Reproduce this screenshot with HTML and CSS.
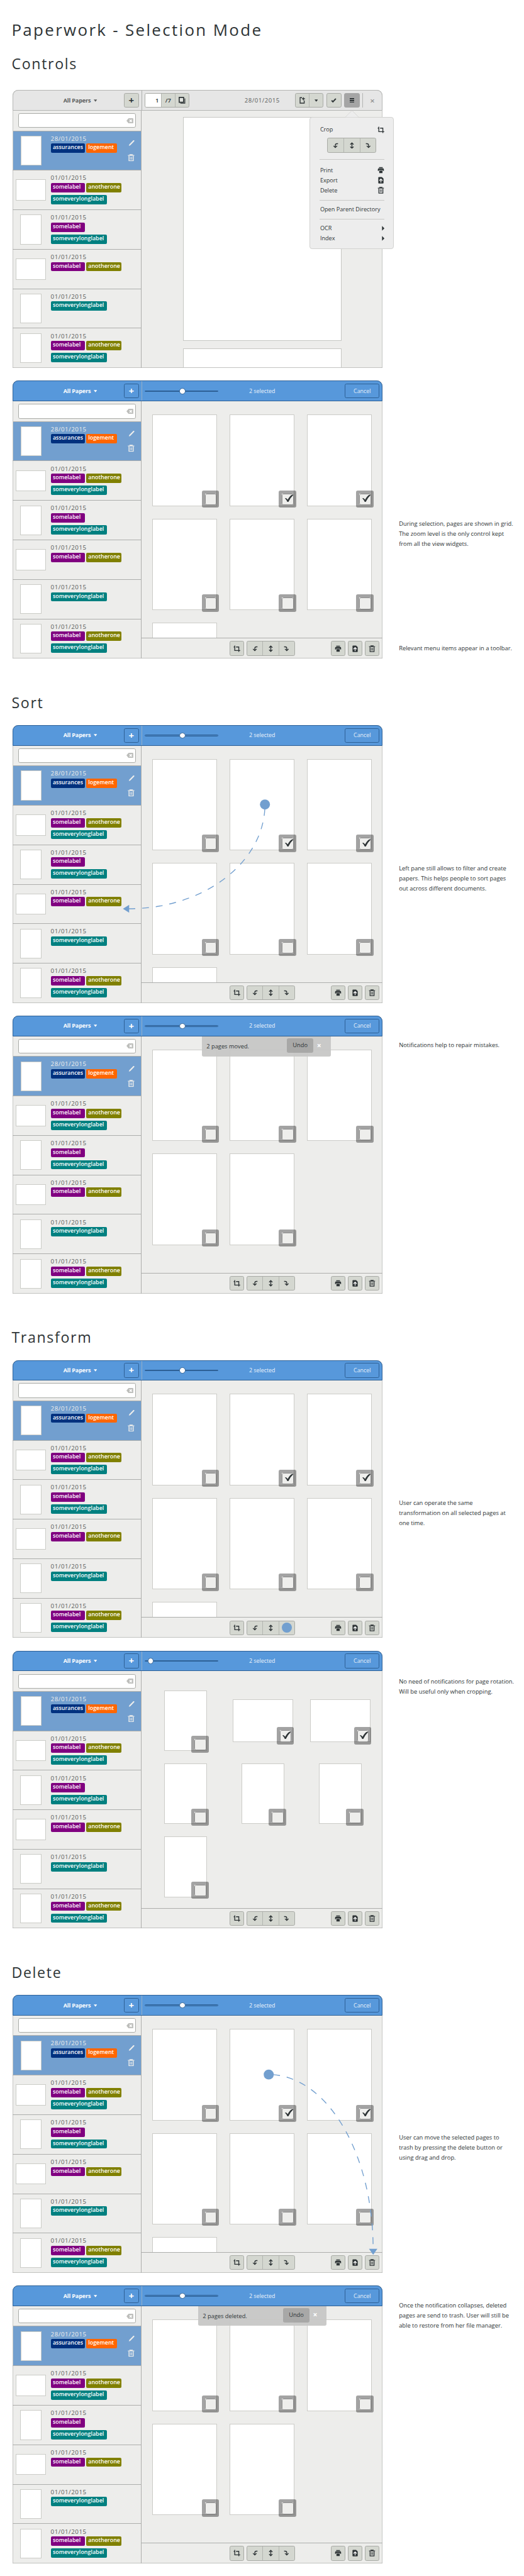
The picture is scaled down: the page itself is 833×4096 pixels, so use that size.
FILE: index.html
```html
<!DOCTYPE html>
<html lang="en">
<head>
<meta charset="utf-8">
<title>Paperwork - Selection Mode</title>
<link rel="stylesheet" href="styles.css">
</head>
<body>
<svg class="defs" width="0" height="0">
  <symbol id="i-crop" viewBox="0 0 16 16"><path d="M3.2 .8V12.2H15.8M.8 4H3.2M6.2 4H12.6V15.4" fill="none" stroke="currentColor" stroke-width="2"/></symbol>
  <symbol id="i-left" viewBox="0 0 16 16"><path d="M13.6 3.7H11Q7.4 3.7 7.4 7.3V12.2M3.2 8.6L7.4 12.6 11.6 8.6" fill="none" stroke="currentColor" stroke-width="2"/></symbol>
  <symbol id="i-right" viewBox="0 0 16 16"><path d="M2.4 3.7H5Q8.6 3.7 8.6 7.3V12.2M4.4 8.6L8.6 12.6 12.8 8.6" fill="none" stroke="currentColor" stroke-width="2"/></symbol>
  <symbol id="i-flip" viewBox="0 0 16 16"><path d="M8 2V14M4.2 5.4L8 1.7 11.8 5.4M4.2 10.6L8 14.3 11.8 10.6" fill="none" stroke="currentColor" stroke-width="2"/></symbol>
  <symbol id="i-print" viewBox="0 0 16 16"><path d="M3.7 1h8.6v2.4H3.7zM1 6.2a2 2 0 0 1 2-2h10a2 2 0 0 1 2 2V10h-2.3V8.2H3.3V10H1zM4.2 9.2h7.6V15H4.2z" fill="currentColor"/></symbol>
  <symbol id="i-export" viewBox="0 0 16 16"><path d="M3.4 .6H10.4L14.2 4.4V14.2A1.4 1.4 0 0 1 12.8 15.6H3.4A1.4 1.4 0 0 1 2 14.2V2A1.4 1.4 0 0 1 3.4 .6z" fill="currentColor"/><path d="M8.1 13.4V6M4.4 9.2L8.1 5.4 11.8 9.2" fill="none" stroke="#fff" stroke-width="1.8"/></symbol>
  <symbol id="i-trash" viewBox="0 0 16 17"><path d="M5 2V1.2H11V2M.6 3.2H15.4M3 4.5V15.6H13V4.5" fill="none" stroke="currentColor" stroke-width="2"/><path d="M6 6.4V13M8 6.4V13M10 6.4V13" stroke="currentColor" stroke-width="1"/></symbol>
  <symbol id="i-pencil" viewBox="0 0 16 16"><path d="M1.2 15L2.6 11.2 12.6 1.2Q13.6.6 14.6 1.6T14.8 3.4L5 13.4z" fill="currentColor"/></symbol>
  <symbol id="i-clear" viewBox="0 0 16 12"><path d="M0 6L5 0H14.5A1.5 1.5 0 0 1 16 1.5V10.5A1.5 1.5 0 0 1 14.5 12H5z" fill="#bdbebb"/><path d="M7.4 3.3L12.6 8.7M12.6 3.3L7.4 8.7" stroke="#fff" stroke-width="2.2"/></symbol>
  <symbol id="i-tick" viewBox="0 0 22 18"><path d="M1.5 9.5Q2.5 8 4.5 9.2L8 12.5Q13 3 18.5 .8 20.5 .2 21 1.5 15 7 9.5 17.5H7Q5 12.5 1.5 9.5z" fill="#2e3436"/></symbol>
  <symbol id="i-down" viewBox="0 0 8 6"><path d="M0 .5H8L4 5.5z" fill="currentColor"/></symbol>
  <symbol id="i-next" viewBox="0 0 6 12"><path d="M.5 .5L6 6 .5 11.5z" fill="currentColor"/></symbol>
  <symbol id="i-pages" viewBox="0 0 16 16"><path d="M1.3 1.3H11.5V12.6H1.3z" fill="#e3e5e1" stroke="currentColor" stroke-width="2.4"/><path d="M14.5 3.5V15H4" fill="none" stroke="currentColor" stroke-width="1.8"/></symbol>
  <symbol id="i-share" viewBox="0 0 16 16"><path d="M7.5 1.9H3V14.6H12.6V8.5" fill="none" stroke="currentColor" stroke-width="2"/><path d="M10.8 1V8M7.4 4.4H14.2" stroke="currentColor" stroke-width="2"/></symbol>
  <symbol id="i-check" viewBox="0 0 16 16"><path d="M3.2 8.5L6.2 11.5 13 4.2" fill="none" stroke="currentColor" stroke-width="3"/></symbol>
</svg>

<main class="sheet">
<h1 class="title">Paperwork - Selection Mode</h1>

<section>
<h2 class="heading heading-first">Controls</h2>
<div class="stage">
  <div class="window">
    <header class="bar bar-gray">
      <div class="bar-left"><span class="filter">All Papers <svg class="caret"><use href="#i-down"/></svg></span><button class="btn plus">+</button></div>
      <div class="bar-right">
        <div class="group pager"><span class="entry">1</span><span class="total">/7</span><span><svg class="ico"><use href="#i-pages"/></svg></span></div>
        <span class="bar-date">28/01/2015</span>
        <div class="bar-tools">
          <div class="group share"><span><svg class="ico"><use href="#i-share"/></svg></span><span><svg class="caret"><use href="#i-down"/></svg></span></div>
          <button class="btn"><svg class="ico"><use href="#i-check"/></svg></button>
          <button class="btn pressed"><i class="lines"></i></button>
          <i class="rule"></i><span class="close">×</span>
        </div>
      </div>
    </header>
    <aside class="side">
      <div class="search"><div class="field"><svg class="clear"><use href="#i-clear"/></svg></div></div>
      <article class="doc current"><i class="thumb"></i><div class="info"><time>28/01/2015</time><div class="tags"><b class="navy">assurances</b><b class="orange">logement</b></div></div><div class="acts"><svg class="pencil"><use href="#i-pencil"/></svg><svg class="bin"><use href="#i-trash"/></svg></div></article>
      <article class="doc"><i class="thumb wide"></i><div class="info"><time>01/01/2015</time><div class="tags"><b class="purple">somelabel</b><b class="olive">anotherone</b><b class="teal">someverylonglabel</b></div></div></article>
      <article class="doc"><i class="thumb"></i><div class="info"><time>01/01/2015</time><div class="tags"><b class="purple">somelabel</b><b class="teal">someverylonglabel</b></div></div></article>
      <article class="doc"><i class="thumb wide"></i><div class="info"><time>01/01/2015</time><div class="tags"><b class="purple">somelabel</b><b class="olive">anotherone</b></div></div></article>
      <article class="doc"><i class="thumb"></i><div class="info"><time>01/01/2015</time><div class="tags"><b class="teal">someverylonglabel</b></div></div></article>
      <article class="doc"><i class="thumb"></i><div class="info"><time>01/01/2015</time><div class="tags"><b class="purple">somelabel</b><b class="olive">anotherone</b><b class="teal">someverylonglabel</b></div></div></article>
    </aside>
    <div class="reader"><div class="sheet-page"></div><div class="sheet-page"></div></div>
  </div>
  <div class="popover">
    <svg class="beak" viewBox="0 0 32 17"><path d="M0 16.5L15.5 1 31 16.5" fill="#ededed" stroke="#cfcfcd"/></svg>
    <div class="item crop-item">Crop<svg class="ico"><use href="#i-crop"/></svg></div>
    <div class="group turn"><span><svg class="ico"><use href="#i-left"/></svg></span><span><svg class="ico"><use href="#i-flip"/></svg></span><span><svg class="ico"><use href="#i-right"/></svg></span></div>
    <div class="block b1"><div class="item">Print<svg class="ico"><use href="#i-print"/></svg></div><div class="item">Export<svg class="ico"><use href="#i-export"/></svg></div><div class="item">Delete<svg class="ico"><use href="#i-trash"/></svg></div></div>
    <div class="block b2"><div class="item"><span class="opd">Open Parent Directory</span></div></div>
    <div class="block b3"><div class="item">OCR<svg class="next"><use href="#i-next"/></svg></div><div class="item">Index<svg class="next"><use href="#i-next"/></svg></div></div>
  </div>
</div>

<div class="stage">
  <div class="window">
    <header class="bar bar-blue">
      <div class="bar-left"><span class="filter">All Papers <svg class="caret"><use href="#i-down"/></svg></span><button class="btn plus">+</button></div>
      <div class="bar-right"><div class="slider"><i class="knob"></i></div><span class="count">2 selected</span><button class="cancel">Cancel</button></div>
    </header>
    <aside class="side">
      <div class="search"><div class="field"><svg class="clear"><use href="#i-clear"/></svg></div></div>
      <article class="doc current"><i class="thumb"></i><div class="info"><time>28/01/2015</time><div class="tags"><b class="navy">assurances</b><b class="orange">logement</b></div></div><div class="acts"><svg class="pencil"><use href="#i-pencil"/></svg><svg class="bin"><use href="#i-trash"/></svg></div></article>
      <article class="doc"><i class="thumb wide"></i><div class="info"><time>01/01/2015</time><div class="tags"><b class="purple">somelabel</b><b class="olive">anotherone</b><b class="teal">someverylonglabel</b></div></div></article>
      <article class="doc"><i class="thumb"></i><div class="info"><time>01/01/2015</time><div class="tags"><b class="purple">somelabel</b><b class="teal">someverylonglabel</b></div></div></article>
      <article class="doc"><i class="thumb wide"></i><div class="info"><time>01/01/2015</time><div class="tags"><b class="purple">somelabel</b><b class="olive">anotherone</b></div></div></article>
      <article class="doc"><i class="thumb"></i><div class="info"><time>01/01/2015</time><div class="tags"><b class="teal">someverylonglabel</b></div></div></article>
      <article class="doc"><i class="thumb"></i><div class="info"><time>01/01/2015</time><div class="tags"><b class="purple">somelabel</b><b class="olive">anotherone</b><b class="teal">someverylonglabel</b></div></div></article>
    </aside>
    <div class="pane">
      <div class="pages">
        <div class="page"><i class="box"></i></div><div class="page"><i class="box"><svg><use href="#i-tick"/></svg></i></div><div class="page"><i class="box"><svg><use href="#i-tick"/></svg></i></div>
        <div class="page"><i class="box"></i></div><div class="page"><i class="box"></i></div><div class="page"><i class="box"></i></div>
        <div class="page"></div>
      </div>
      <footer class="tools"><button class="btn"><svg class="ico"><use href="#i-crop"/></svg></button><div class="group turn"><span><svg class="ico"><use href="#i-left"/></svg></span><span><svg class="ico"><use href="#i-flip"/></svg></span><span><svg class="ico"><use href="#i-right"/></svg></span></div><div class="acts-right"><button class="btn"><svg class="ico"><use href="#i-print"/></svg></button><button class="btn"><svg class="ico"><use href="#i-export"/></svg></button><button class="btn"><svg class="ico"><use href="#i-trash"/></svg></button></div></footer>
    </div>
  </div>
  <div class="notes n-select"><p>During selection, pages are shown in grid.<br>The zoom level is the only control kept<br>from all the view widgets.</p><p>Relevant menu items appear in a toolbar.</p></div>
</div>
</section>

<section>
<h2 class="heading">Sort</h2>
<div class="stage">
  <div class="window">
    <header class="bar bar-blue">
      <div class="bar-left"><span class="filter">All Papers <svg class="caret"><use href="#i-down"/></svg></span><button class="btn plus">+</button></div>
      <div class="bar-right"><div class="slider"><i class="knob"></i></div><span class="count">2 selected</span><button class="cancel">Cancel</button></div>
    </header>
    <aside class="side">
      <div class="search"><div class="field"><svg class="clear"><use href="#i-clear"/></svg></div></div>
      <article class="doc current"><i class="thumb"></i><div class="info"><time>28/01/2015</time><div class="tags"><b class="navy">assurances</b><b class="orange">logement</b></div></div><div class="acts"><svg class="pencil"><use href="#i-pencil"/></svg><svg class="bin"><use href="#i-trash"/></svg></div></article>
      <article class="doc"><i class="thumb wide"></i><div class="info"><time>01/01/2015</time><div class="tags"><b class="purple">somelabel</b><b class="olive">anotherone</b><b class="teal">someverylonglabel</b></div></div></article>
      <article class="doc"><i class="thumb"></i><div class="info"><time>01/01/2015</time><div class="tags"><b class="purple">somelabel</b><b class="teal">someverylonglabel</b></div></div></article>
      <article class="doc"><i class="thumb wide"></i><div class="info"><time>01/01/2015</time><div class="tags"><b class="purple">somelabel</b><b class="olive">anotherone</b></div></div></article>
      <article class="doc"><i class="thumb"></i><div class="info"><time>01/01/2015</time><div class="tags"><b class="teal">someverylonglabel</b></div></div></article>
      <article class="doc"><i class="thumb"></i><div class="info"><time>01/01/2015</time><div class="tags"><b class="purple">somelabel</b><b class="olive">anotherone</b><b class="teal">someverylonglabel</b></div></div></article>
    </aside>
    <div class="pane">
      <div class="pages">
        <div class="page"><i class="box"></i></div><div class="page"><i class="box"><svg><use href="#i-tick"/></svg></i></div><div class="page"><i class="box"><svg><use href="#i-tick"/></svg></i></div>
        <div class="page"><i class="box"></i></div><div class="page"><i class="box"></i></div><div class="page"><i class="box"></i></div>
        <div class="page"></div>
      </div>
      <footer class="tools"><button class="btn"><svg class="ico"><use href="#i-crop"/></svg></button><div class="group turn"><span><svg class="ico"><use href="#i-left"/></svg></span><span><svg class="ico"><use href="#i-flip"/></svg></span><span><svg class="ico"><use href="#i-right"/></svg></span></div><div class="acts-right"><button class="btn"><svg class="ico"><use href="#i-print"/></svg></button><button class="btn"><svg class="ico"><use href="#i-export"/></svg></button><button class="btn"><svg class="ico"><use href="#i-trash"/></svg></button></div></footer>
    </div>
  </div>
  <svg class="drag" viewBox="0 0 860 647"><path class="trail" d="M587.7 184.9A316.7 242.8 0 0 1 271 427.7"/><circle cx="587.7" cy="184.9" r="11.7"/><path d="M257 427.7L271.5 418.5V437z"/></svg>
  <div class="notes n-sort"><p>Left pane still allows to filter and create<br>papers. This helps people to sort pages<br>out across different documents.</p></div>
</div>

<div class="stage">
  <div class="window">
    <header class="bar bar-blue">
      <div class="bar-left"><span class="filter">All Papers <svg class="caret"><use href="#i-down"/></svg></span><button class="btn plus">+</button></div>
      <div class="bar-right"><div class="slider"><i class="knob"></i></div><span class="count">2 selected</span><button class="cancel">Cancel</button></div>
    </header>
    <aside class="side">
      <div class="search"><div class="field"><svg class="clear"><use href="#i-clear"/></svg></div></div>
      <article class="doc current"><i class="thumb"></i><div class="info"><time>28/01/2015</time><div class="tags"><b class="navy">assurances</b><b class="orange">logement</b></div></div><div class="acts"><svg class="pencil"><use href="#i-pencil"/></svg><svg class="bin"><use href="#i-trash"/></svg></div></article>
      <article class="doc"><i class="thumb wide"></i><div class="info"><time>01/01/2015</time><div class="tags"><b class="purple">somelabel</b><b class="olive">anotherone</b><b class="teal">someverylonglabel</b></div></div></article>
      <article class="doc"><i class="thumb"></i><div class="info"><time>01/01/2015</time><div class="tags"><b class="purple">somelabel</b><b class="teal">someverylonglabel</b></div></div></article>
      <article class="doc"><i class="thumb wide"></i><div class="info"><time>01/01/2015</time><div class="tags"><b class="purple">somelabel</b><b class="olive">anotherone</b></div></div></article>
      <article class="doc"><i class="thumb"></i><div class="info"><time>01/01/2015</time><div class="tags"><b class="teal">someverylonglabel</b></div></div></article>
      <article class="doc"><i class="thumb"></i><div class="info"><time>01/01/2015</time><div class="tags"><b class="purple">somelabel</b><b class="olive">anotherone</b><b class="teal">someverylonglabel</b></div></div></article>
    </aside>
    <div class="pane">
      <div class="pages">
        <div class="page"><i class="box"></i></div><div class="page"><i class="box"></i></div><div class="page"><i class="box"></i></div>
        <div class="page"><i class="box"></i></div><div class="page"><i class="box"></i></div>
      </div>
      <div class="toast"><span class="msg">2 pages moved.</span><span class="undo">Undo</span><span class="dismiss">×</span></div>
      <footer class="tools"><button class="btn"><svg class="ico"><use href="#i-crop"/></svg></button><div class="group turn"><span><svg class="ico"><use href="#i-left"/></svg></span><span><svg class="ico"><use href="#i-flip"/></svg></span><span><svg class="ico"><use href="#i-right"/></svg></span></div><div class="acts-right"><button class="btn"><svg class="ico"><use href="#i-print"/></svg></button><button class="btn"><svg class="ico"><use href="#i-export"/></svg></button><button class="btn"><svg class="ico"><use href="#i-trash"/></svg></button></div></footer>
    </div>
  </div>
  <div class="notes n-moved"><p>Notifications help to repair mistakes.</p></div>
</div>
</section>

<section>
<h2 class="heading">Transform</h2>
<div class="stage">
  <div class="window">
    <header class="bar bar-blue">
      <div class="bar-left"><span class="filter">All Papers <svg class="caret"><use href="#i-down"/></svg></span><button class="btn plus">+</button></div>
      <div class="bar-right"><div class="slider"><i class="knob"></i></div><span class="count">2 selected</span><button class="cancel">Cancel</button></div>
    </header>
    <aside class="side">
      <div class="search"><div class="field"><svg class="clear"><use href="#i-clear"/></svg></div></div>
      <article class="doc current"><i class="thumb"></i><div class="info"><time>28/01/2015</time><div class="tags"><b class="navy">assurances</b><b class="orange">logement</b></div></div><div class="acts"><svg class="pencil"><use href="#i-pencil"/></svg><svg class="bin"><use href="#i-trash"/></svg></div></article>
      <article class="doc"><i class="thumb wide"></i><div class="info"><time>01/01/2015</time><div class="tags"><b class="purple">somelabel</b><b class="olive">anotherone</b><b class="teal">someverylonglabel</b></div></div></article>
      <article class="doc"><i class="thumb"></i><div class="info"><time>01/01/2015</time><div class="tags"><b class="purple">somelabel</b><b class="teal">someverylonglabel</b></div></div></article>
      <article class="doc"><i class="thumb wide"></i><div class="info"><time>01/01/2015</time><div class="tags"><b class="purple">somelabel</b><b class="olive">anotherone</b></div></div></article>
      <article class="doc"><i class="thumb"></i><div class="info"><time>01/01/2015</time><div class="tags"><b class="teal">someverylonglabel</b></div></div></article>
      <article class="doc"><i class="thumb"></i><div class="info"><time>01/01/2015</time><div class="tags"><b class="purple">somelabel</b><b class="olive">anotherone</b><b class="teal">someverylonglabel</b></div></div></article>
    </aside>
    <div class="pane">
      <div class="pages">
        <div class="page"><i class="box"></i></div><div class="page"><i class="box"><svg><use href="#i-tick"/></svg></i></div><div class="page"><i class="box"><svg><use href="#i-tick"/></svg></i></div>
        <div class="page"><i class="box"></i></div><div class="page"><i class="box"></i></div><div class="page"><i class="box"></i></div>
        <div class="page"></div>
      </div>
      <footer class="tools"><button class="btn"><svg class="ico"><use href="#i-crop"/></svg></button><div class="group turn"><span><svg class="ico"><use href="#i-left"/></svg></span><span><svg class="ico"><use href="#i-flip"/></svg></span><span><i class="press"></i></span></div><div class="acts-right"><button class="btn"><svg class="ico"><use href="#i-print"/></svg></button><button class="btn"><svg class="ico"><use href="#i-export"/></svg></button><button class="btn"><svg class="ico"><use href="#i-trash"/></svg></button></div></footer>
    </div>
  </div>
  <div class="notes n-transform"><p>User can operate the same<br>transformation on all selected pages at<br>one time.</p></div>
</div>

<div class="stage">
  <div class="window">
    <header class="bar bar-blue">
      <div class="bar-left"><span class="filter">All Papers <svg class="caret"><use href="#i-down"/></svg></span><button class="btn plus">+</button></div>
      <div class="bar-right"><div class="slider slider-low"><i class="knob"></i></div><span class="count">2 selected</span><button class="cancel">Cancel</button></div>
    </header>
    <aside class="side">
      <div class="search"><div class="field"><svg class="clear"><use href="#i-clear"/></svg></div></div>
      <article class="doc current"><i class="thumb"></i><div class="info"><time>28/01/2015</time><div class="tags"><b class="navy">assurances</b><b class="orange">logement</b></div></div><div class="acts"><svg class="pencil"><use href="#i-pencil"/></svg><svg class="bin"><use href="#i-trash"/></svg></div></article>
      <article class="doc"><i class="thumb wide"></i><div class="info"><time>01/01/2015</time><div class="tags"><b class="purple">somelabel</b><b class="olive">anotherone</b><b class="teal">someverylonglabel</b></div></div></article>
      <article class="doc"><i class="thumb"></i><div class="info"><time>01/01/2015</time><div class="tags"><b class="purple">somelabel</b><b class="teal">someverylonglabel</b></div></div></article>
      <article class="doc"><i class="thumb wide"></i><div class="info"><time>01/01/2015</time><div class="tags"><b class="purple">somelabel</b><b class="olive">anotherone</b></div></div></article>
      <article class="doc"><i class="thumb"></i><div class="info"><time>01/01/2015</time><div class="tags"><b class="teal">someverylonglabel</b></div></div></article>
      <article class="doc"><i class="thumb"></i><div class="info"><time>01/01/2015</time><div class="tags"><b class="purple">somelabel</b><b class="olive">anotherone</b><b class="teal">someverylonglabel</b></div></div></article>
    </aside>
    <div class="pane">
      <div class="pages small">
        <div class="page"><i class="box"></i></div><div class="page turned"><i class="box"><svg><use href="#i-tick"/></svg></i></div><div class="page turned"><i class="box"><svg><use href="#i-tick"/></svg></i></div>
        <div class="page"><i class="box"></i></div><div class="page"><i class="box"></i></div><div class="page"><i class="box"></i></div>
        <div class="page"><i class="box"></i></div>
      </div>
      <footer class="tools"><button class="btn"><svg class="ico"><use href="#i-crop"/></svg></button><div class="group turn"><span><svg class="ico"><use href="#i-left"/></svg></span><span><svg class="ico"><use href="#i-flip"/></svg></span><span><svg class="ico"><use href="#i-right"/></svg></span></div><div class="acts-right"><button class="btn"><svg class="ico"><use href="#i-print"/></svg></button><button class="btn"><svg class="ico"><use href="#i-export"/></svg></button><button class="btn"><svg class="ico"><use href="#i-trash"/></svg></button></div></footer>
    </div>
  </div>
  <div class="notes n-rotate"><p>No need of notifications for page rotation.<br>Will be useful only when cropping.</p></div>
</div>
</section>

<section>
<h2 class="heading">Delete</h2>
<div class="stage">
  <div class="window">
    <header class="bar bar-blue">
      <div class="bar-left"><span class="filter">All Papers <svg class="caret"><use href="#i-down"/></svg></span><button class="btn plus">+</button></div>
      <div class="bar-right"><div class="slider"><i class="knob"></i></div><span class="count">2 selected</span><button class="cancel">Cancel</button></div>
    </header>
    <aside class="side">
      <div class="search"><div class="field"><svg class="clear"><use href="#i-clear"/></svg></div></div>
      <article class="doc current"><i class="thumb"></i><div class="info"><time>28/01/2015</time><div class="tags"><b class="navy">assurances</b><b class="orange">logement</b></div></div><div class="acts"><svg class="pencil"><use href="#i-pencil"/></svg><svg class="bin"><use href="#i-trash"/></svg></div></article>
      <article class="doc"><i class="thumb wide"></i><div class="info"><time>01/01/2015</time><div class="tags"><b class="purple">somelabel</b><b class="olive">anotherone</b><b class="teal">someverylonglabel</b></div></div></article>
      <article class="doc"><i class="thumb"></i><div class="info"><time>01/01/2015</time><div class="tags"><b class="purple">somelabel</b><b class="teal">someverylonglabel</b></div></div></article>
      <article class="doc"><i class="thumb wide"></i><div class="info"><time>01/01/2015</time><div class="tags"><b class="purple">somelabel</b><b class="olive">anotherone</b></div></div></article>
      <article class="doc"><i class="thumb"></i><div class="info"><time>01/01/2015</time><div class="tags"><b class="teal">someverylonglabel</b></div></div></article>
      <article class="doc"><i class="thumb"></i><div class="info"><time>01/01/2015</time><div class="tags"><b class="purple">somelabel</b><b class="olive">anotherone</b><b class="teal">someverylonglabel</b></div></div></article>
    </aside>
    <div class="pane">
      <div class="pages">
        <div class="page"><i class="box"></i></div><div class="page"><i class="box"><svg><use href="#i-tick"/></svg></i></div><div class="page"><i class="box"><svg><use href="#i-tick"/></svg></i></div>
        <div class="page"><i class="box"></i></div><div class="page"><i class="box"></i></div><div class="page"><i class="box"></i></div>
        <div class="page"></div>
      </div>
      <footer class="tools"><button class="btn"><svg class="ico"><use href="#i-crop"/></svg></button><div class="group turn"><span><svg class="ico"><use href="#i-left"/></svg></span><span><svg class="ico"><use href="#i-flip"/></svg></span><span><svg class="ico"><use href="#i-right"/></svg></span></div><div class="acts-right"><button class="btn"><svg class="ico"><use href="#i-print"/></svg></button><button class="btn"><svg class="ico"><use href="#i-export"/></svg></button><button class="btn"><svg class="ico"><use href="#i-trash"/></svg></button></div></footer>
    </div>
  </div>
  <svg class="drag" viewBox="0 0 860 647"><path class="trail" d="M596.5 185.5A243 406 0 0 1 839.6 591.4"/><circle cx="596.5" cy="185.5" r="11.7"/><path d="M830 591.4H849.5L839.7 605.5z"/></svg>
  <div class="notes n-delete"><p>User can move the selected pages to<br>trash by pressing the delete button or<br>using drag and drop.</p></div>
</div>

<div class="stage">
  <div class="window">
    <header class="bar bar-blue">
      <div class="bar-left"><span class="filter">All Papers <svg class="caret"><use href="#i-down"/></svg></span><button class="btn plus">+</button></div>
      <div class="bar-right"><div class="slider"><i class="knob"></i></div><span class="count">2 selected</span><button class="cancel">Cancel</button></div>
    </header>
    <aside class="side">
      <div class="search"><div class="field"><svg class="clear"><use href="#i-clear"/></svg></div></div>
      <article class="doc current"><i class="thumb"></i><div class="info"><time>28/01/2015</time><div class="tags"><b class="navy">assurances</b><b class="orange">logement</b></div></div><div class="acts"><svg class="pencil"><use href="#i-pencil"/></svg><svg class="bin"><use href="#i-trash"/></svg></div></article>
      <article class="doc"><i class="thumb wide"></i><div class="info"><time>01/01/2015</time><div class="tags"><b class="purple">somelabel</b><b class="olive">anotherone</b><b class="teal">someverylonglabel</b></div></div></article>
      <article class="doc"><i class="thumb"></i><div class="info"><time>01/01/2015</time><div class="tags"><b class="purple">somelabel</b><b class="teal">someverylonglabel</b></div></div></article>
      <article class="doc"><i class="thumb wide"></i><div class="info"><time>01/01/2015</time><div class="tags"><b class="purple">somelabel</b><b class="olive">anotherone</b></div></div></article>
      <article class="doc"><i class="thumb"></i><div class="info"><time>01/01/2015</time><div class="tags"><b class="teal">someverylonglabel</b></div></div></article>
      <article class="doc"><i class="thumb"></i><div class="info"><time>01/01/2015</time><div class="tags"><b class="purple">somelabel</b><b class="olive">anotherone</b><b class="teal">someverylonglabel</b></div></div></article>
    </aside>
    <div class="pane">
      <div class="pages">
        <div class="page"><i class="box"></i></div><div class="page"><i class="box"></i></div><div class="page"><i class="box"></i></div>
        <div class="page"><i class="box"></i></div><div class="page"><i class="box"></i></div>
      </div>
      <div class="toast toast-deleted"><span class="msg">2 pages deleted.</span><span class="undo">Undo</span><span class="dismiss">×</span></div>
      <footer class="tools"><button class="btn"><svg class="ico"><use href="#i-crop"/></svg></button><div class="group turn"><span><svg class="ico"><use href="#i-left"/></svg></span><span><svg class="ico"><use href="#i-flip"/></svg></span><span><svg class="ico"><use href="#i-right"/></svg></span></div><div class="acts-right"><button class="btn"><svg class="ico"><use href="#i-print"/></svg></button><button class="btn"><svg class="ico"><use href="#i-export"/></svg></button><button class="btn"><svg class="ico"><use href="#i-trash"/></svg></button></div></footer>
    </div>
  </div>
  <div class="notes n-deleted"><p>Once the notification collapses, deleted<br>pages are send to trash. User will still be<br>able to restore from her file manager.</p></div>
</div>
</section>
</main>
</body>
</html>
```
FILE: styles.css
```css
* { box-sizing: border-box; }
body { margin: 0; background: #fff; }
.defs { display: block; position: absolute; }

/* The board is authored on a 1220 x 6000 canvas and scaled down. */
.sheet {
  zoom: 0.68266;
  width: 1220px;
  height: 6000px;
  overflow: hidden;
  font: 13px/23.5px "Open Sans", "Noto Sans", sans-serif;
  color: #2e3436;
}
.sheet svg { display: block; }

.title, .heading { margin: 0; font-weight: 400; }
.title { height: 110px; padding: 44px 0 0 27px; font-size: 38px; line-height: 50px; letter-spacing: 3.4px; white-space: nowrap; }
.heading { height: 125px; padding: 53px 0 0 27px; font-size: 34px; line-height: 40px; letter-spacing: 2.4px; }
.heading-first { height: 100px; padding-top: 19px; }

.stage { position: relative; display: grid; grid-template-columns: 860px 1fr; height: 647px; margin: 0 0 30px 30px; }
.window { display: grid; grid-template: 48px 599px / 300px 560px; background: #ededeb; box-shadow: inset 0 0 0 1px #b4b5b2; border-radius: 13px 13px 0 0; }

/* Header bars */
.bar { grid-column: 1 / 3; display: grid; grid-template-columns: 300px 558px; border-radius: 13px 13px 0 0; border: 1px solid #b4b5b3; }
.bar-gray { background: #e6e6e6; }
.bar-blue { background: #5798db; border-color: #2d6096; color: #fff; }
.bar-left { display: flex; align-items: center; justify-content: space-between; padding: 0 6px 0 116px; border-right: 1px solid #adaeac; }
.bar-blue .bar-left { border-color: #93aec9; }
.filter { display: flex; align-items: center; gap: 7px; font-weight: 700; font-size: 13.3px; letter-spacing: -.2px; color: #5a5c5b; }
.bar-blue .filter { color: #fff; }
.caret { width: 8px; height: 6px; }
.bar-right { display: grid; grid-template-columns: 1fr auto 1fr; align-items: center; padding: 0 6px; }
.btn { display: flex; align-items: center; justify-content: center; width: 34px; height: 34px; padding: 0; border: 1px solid #a9aba6; border-radius: 4px; background: #d4d7d0; color: #2e3436; font: inherit; }
.bar .btn { width: 36px; }
.bar .plus { font-size: 22px; font-weight: 700; line-height: 20px; }
.bar-blue .plus { background: none; border-color: #2d6096; color: #fff; }
.ico { width: 16px; height: 16px; }
.group { display: flex; height: 34px; border: 1px solid #a9aba6; border-radius: 4px; background: #d4d7d0; overflow: hidden; color: #2e3436; }
.group > span { flex: 1; display: flex; align-items: center; justify-content: center; border-left: 1px solid #b3b5b0; }
.group > span:first-child { border-left: 0; }
.pager { width: 103px; font-size: 14px; font-weight: 600; }
.group > .entry { flex: 0 0 36px; background: #fff; justify-content: flex-end; padding-right: 5px; }
.bar-date { font-size: 14px; font-weight: 500; letter-spacing: .75px; color: #5a5c5b; width: 88px; text-align: center; }
.bar-tools { display: flex; align-items: center; justify-content: flex-end; gap: 6px; }
.share { width: 67px; }
.bar .pressed { background: #a5a5a5; border-color: #a5a5a5; }
.lines { width: 11px; height: 11px; background: repeating-linear-gradient(#2e3436 0 2.2px, transparent 2.2px 4.4px); }
.rule { width: 1px; height: 34px; background: #b4b5b3; }
.close { width: 33px; text-align: center; font-size: 19px; font-weight: 600; color: #8e8f8e; }
.slider { width: 171px; height: 4px; border: 1px solid #2d6096; border-radius: 3px; background: #4a86c4; display: flex; align-items: center; padding-left: 79px; }
.slider-low { padding-left: 5px; }
.knob { flex: none; width: 14px; height: 14px; border: 1px solid #2d6096; border-radius: 50%; background: #fff; }
.count { font-size: 13px; width: 70px; text-align: center; white-space: nowrap; color: #eef4fb; }
.cancel { justify-self: end; width: 80px; height: 34px; padding: 0; border: 1px solid #2d6096; border-radius: 4px; background: none; color: #e6eff9; font: inherit; }

/* Document list */
.side { border-right: 1px solid #adaeac; }
.search { height: 46px; padding: 6px 12px 0 13px; }
.field { height: 34px; border: 2px solid #aaaca8; border-radius: 4px; background: #fff; display: flex; align-items: center; justify-content: flex-end; padding-right: 5px; }
.clear { width: 16px; height: 12px; }
.doc { display: grid; grid-template-columns: 84px 1fr; column-gap: 4px; height: 92px; border-top: 1px solid #adaeac; }
.doc.current { background: #729fcf; margin-left: 1px; grid-template-columns: 83px 160px 48px; column-gap: 4px; }
.thumb { align-self: center; justify-self: center; width: 49px; height: 69px; border: 1px solid #cbccc7; background: #fff; }
.thumb.wide { width: 70px; height: 49px; }
.info { padding-top: 6px; width: 172px; }
.current .info { width: 160px; }
.info time { display: block; height: 23px; line-height: 22px; font-size: 14.3px; font-weight: 500; letter-spacing: .8px; color: #5a5c5b; }
.current time { color: #eeeeec; }
.tags { display: flex; flex-wrap: wrap; gap: 6px 2px; }
.tags b { height: 21.7px; padding-left: 5px; border-radius: 3px; font-size: 13px; line-height: 20px; font-weight: 600; letter-spacing: .05px; color: #fff; white-space: nowrap; }
.navy { width: 80.5px; background: #00317f; }
.orange { width: 71.5px; background: #f60; }
.purple { width: 80.5px; background: #800080; }
.olive { width: 82.5px; background: #808000; }
.teal { width: 131px; background: #008080; }
.acts { display: flex; flex-direction: column; align-items: center; padding-top: 20px; color: #eeeeec; gap: 18px; }
.pencil { width: 15px; height: 16px; }
.bin { width: 16px; height: 17px; }

/* Page views */
.reader { overflow: hidden; padding: 15px 0 0 97px; margin: 0 1px 1px 0; }
.sheet-page { width: 369px; height: 521px; margin-bottom: 17px; background: #fff; border: 1px solid #c6c7c3; }
.pane { position: relative; display: grid; grid-template-rows: 551px 48px; }
.pages { display: grid; grid-template-columns: repeat(3, 151px); grid-auto-rows: 213px; gap: 29.4px 29px; padding: 31px 0 0 25px; overflow: hidden; }
.page { position: relative; background: #fff; border: 1px solid #ccccc8; }
.box { position: absolute; right: -5px; bottom: -5px; width: 40px; height: 40px; border-radius: 4px; border: 8px solid rgba(0, 0, 0, .36); }
.box::before { content: ""; display: block; width: 24px; height: 24px; border: 1px solid #8f8f8f; border-radius: 4px; background: #eeeeec; }
.box svg { position: absolute; left: 5px; top: 2px; width: 22px; height: 18px; }
.pages.small { grid-template-rows: 141px 141px 141px; padding: 45px 0 0 27px; justify-items: center; align-items: center; row-gap: 29px; }
.small .page { width: 100px; height: 141px; }
.small .page.turned { width: 141px; height: 100px; }
.small .turned .box { right: -3px; bottom: -6px; }
.tools { display: flex; align-items: flex-start; border-top: 1px solid #adaeac; padding: 6px 6px 0 204px; }
.tools .turn { margin-left: 6px; }
.turn { width: 113px; }
.press { width: 24px; height: 24px; border-radius: 50%; background: #729fcf; }
.acts-right { display: flex; gap: 6px; margin-left: auto; }

/* In-window notifications */
.toast { position: absolute; left: 140px; top: 0; width: 300px; height: 47px; border-radius: 0 0 4px 4px; background: rgba(198, 198, 197, .93); display: flex; align-items: center; padding: 0 14px 0 11px; font-size: 13.6px; }
.msg { flex: none; width: 187px; }
.undo { width: 62px; height: 34px; line-height: 33px; border-radius: 4px; background: rgba(0, 0, 0, .16); text-align: center; margin-top: -4px; }
.dismiss { flex: 1; text-align: center; color: #fff; font-size: 18px; font-weight: 700; margin-top: -4px; }
.toast-deleted { left: 131px; height: 46px; }

/* Menu */
.popover { position: absolute; left: 690px; top: 62px; width: 197px; height: 308px; padding: 20px 20px 0 22px; border: 1px solid #d2d2d0; border-radius: 6px; background: #ededed; font-size: 13.4px; }
.beak { position: absolute; left: 83px; top: -17px; width: 32px; height: 17px; }
.item { display: flex; align-items: center; justify-content: space-between; height: 23.5px; padding-left: 2px; }
.crop-item { height: 17px; }
.popover .turn { margin: 11px 0 0 19px; width: 114px; }
.block { border-top: 1px solid #c9c9c7; }
.b1 { margin-top: 15px; padding-top: 13px; height: 95px; }
.b2 { height: 44.5px; padding-top: 10px; }
.b3 { padding-top: 9px; }
.next { width: 6px; height: 12px; }
.opd { white-space: nowrap; }

/* Drag trails */
.drag { position: absolute; left: 0; top: 0; width: 860px; height: 647px; fill: #729fcf; }
.trail { fill: none; stroke: #729fcf; stroke-width: 2; stroke-dasharray: 16 16; stroke-dashoffset: -10.4; }

/* Side notes */
.notes { margin-left: 39px; white-space: nowrap; font-size: 13.7px; }
.notes p { margin: 0; }
.n-select { display: flex; flex-direction: column; justify-content: space-between; padding: 321px 0 12px; }
.n-sort { padding-top: 322px; }
.n-moved { padding-top: 57px; }
.n-transform { padding-top: 322px; }
.n-rotate { padding-top: 61px; }
.n-delete { padding-top: 320px; }
.n-deleted { padding-top: 34px; }
```
